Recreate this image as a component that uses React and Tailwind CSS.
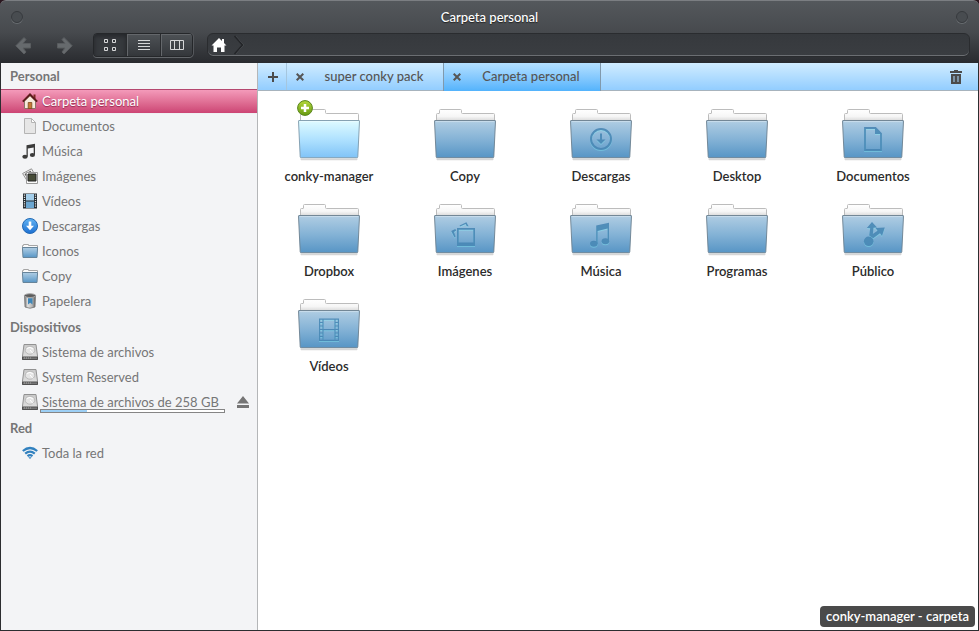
import React from "react"

const FolderDefs = () => (
	<svg className="absolute w-0 h-0" aria-hidden="true">
		<defs>
			<linearGradient id="front" x1="0" y1="0" x2="0" y2="1">
				<stop offset="0" stopColor="#b0cde3" />
				<stop offset="0.5" stopColor="#85b3d6" />
				<stop offset="1" stopColor="#5795c5" />
			</linearGradient>
			<linearGradient id="frontLit" x1="0" y1="0" x2="0" y2="1">
				<stop offset="0" stopColor="#dffbff" />
				<stop offset="0.5" stopColor="#b0e2ff" />
				<stop offset="1" stopColor="#80c3f7" />
			</linearGradient>
			<linearGradient id="paper" x1="0" y1="0" x2="0" y2="1">
				<stop offset="0" stopColor="#ffffff" />
				<stop offset="0.6" stopColor="#f6f6f6" />
				<stop offset="1" stopColor="#d8d8d8" />
			</linearGradient>
			<linearGradient id="green" x1="0" y1="0" x2="0" y2="1">
				<stop offset="0" stopColor="#b5d83f" />
				<stop offset="1" stopColor="#679a10" />
			</linearGradient>
			<linearGradient id="blue" x1="0" y1="0" x2="0" y2="1">
				<stop offset="0" stopColor="#62b4f3" />
				<stop offset="1" stopColor="#1c6fd2" />
			</linearGradient>
			<linearGradient id="metal" x1="0" y1="0" x2="0" y2="1">
				<stop offset="0" stopColor="#c9c9c9" />
				<stop offset="1" stopColor="#e2e2e2" />
			</linearGradient>
			<linearGradient id="can" x1="0" y1="0" x2="1" y2="0">
				<stop offset="0" stopColor="#6d6d6d" />
				<stop offset="0.3" stopColor="#e2e2e2" />
				<stop offset="0.7" stopColor="#b6b6b6" />
				<stop offset="1" stopColor="#5c5c5c" />
			</linearGradient>
		</defs>
	</svg>
)

/*
 * Emblems, drawn on the front of a folder
 */
const emblems = {
	download: (
		<g fill="none" stroke="#4583b2" strokeWidth="2">
			<circle cx="32" cy="33" r="10" />
			<path d="M32 27.5v7" />
			<path d="M27.5 33.5h9L32 38z" fill="#4583b2" stroke="none" />
		</g>
	),
	document: (
		<g fill="none" stroke="#4583b2" strokeWidth="1.8">
			<path d="M24 22h10.5l5.5 5.5v16.5H24z" />
			<path d="M34 22v6h6z" fill="#4583b2" stroke="none" />
		</g>
	),
	pictures: (
		<g fill="#4583b2">
			<path fillRule="evenodd" d="M24 27h18v18H24zM25.7 28.7v12.8h14.6V28.7z" />
			<path d="M22.3 28l.9 1.6-2.2 1.5 1.5 4.5-1 .8L18.2 30z" />
			<path d="M26.6 24.4l6.8-3.2 2.2 4h-1.8l-1.2-2.1-5.6 2.3z" />
		</g>
	),
	music: (
		<g fill="#4583b2">
			<path d="M27.2 24.4L40 21.7v19.4h-1.4V27.6l-10 2.4v13h-1.4z" />
			<ellipse cx="24.8" cy="42.8" rx="3.8" ry="3" />
			<ellipse cx="36.4" cy="40.2" rx="3.8" ry="3" />
		</g>
	),
	share: (
		<g fill="#4583b2">
			<circle cx="27.7" cy="40.3" r="4.8" />
			<path d="M28.2 34.6l1-7.4-3.4-.2L31 21l5 5.4-3.500.3-.6 6.300 4.600-3.200-2-2.800 9.300-.6-2.800 8.500-2-2.600-6.800 5z" />
		</g>
	),
	video: (
		<g fill="none" stroke="#4583b2" strokeWidth="1.2">
			<path d="M22.6 23.1h18.8v21.2H22.6zM26 23v21.3M38 23v21.3M26 33.7h12" />
			<path d="M22.6 26.5H26M22.6 30H26M22.6 33.5H26M22.6 37H26M22.6 40.5H26M38 26.5h3.4M38 30h3.4M38 33.5h3.4M38 37h3.4M38 40.5h3.4" />
		</g>
	),
}

const Folder = ({ emblem, lit }) => (
	<svg className="w-16 h-14" viewBox="0 0 64 56" aria-hidden="true">
		<path d="M3 52.6h58l-1 1.6H4z" fill="#000" opacity="0.16" />
		<path
			d="M3.5 15V8.5q0-1 1-1h1.5q.5 0 .5-.5V4.5q0-1 1-1h20q1 0 1 1v2q0 1 1 1h31q1 0 1 1V15z"
			fill={lit ? "#ffffff" : "url(#paper)"}
			stroke="#bcbcbc"
		/>
		<path
			d="M2 14.5h60q.6 0 .5.6l-1.7 35.7q0 .9-1 .9H4.2q-1 0-1-.9L1.5 15.1q0-.6.5-.6z"
			fill={lit ? "url(#frontLit)" : "url(#front)"}
			stroke={lit ? "#7c99ab" : "#6a7f8f"}
			strokeOpacity="0.9"
		/>
		<path d="M3 15.6h58" stroke="#fff" strokeOpacity="0.35" />
		{emblem && <g className="brightness-200" transform="translate(0 1)" opacity="0.3">{emblems[emblem]}</g>}
		{emblem && <g opacity="0.85">{emblems[emblem]}</g>}
	</svg>
)

/*
 * Sidebar icons
 */
const MiniFolder = () => (
	<svg className="w-4 h-4" viewBox="0 0 16 16" aria-hidden="true">
		<path d="M.5 5V2.5h1V1.5h5v1h9V5z" fill="#fafafa" stroke="#a5a5a5" />
		<path d="M.4 4.5h15.2L15 14.5H1z" fill="url(#front)" stroke="#66849a" />
	</svg>
)

const Drive = () => (
	<svg className="w-4 h-4" viewBox="0 0 16 16" aria-hidden="true">
		<path d="M2 .5h12l1.5 11.5v3.5H.5V12z" fill="url(#metal)" stroke="#929292" />
		<ellipse cx="8" cy="6.2" rx="4.8" ry="4" fill="#e4e4e4" stroke="#b0b0b0" strokeWidth="0.8" />
		<path d="M5 4.5q3-2.5 6 .5M8 6l3 3.5" fill="none" stroke="#fff" />
		<path d="M.5 13h15v2.5H.5z" fill="#777" stroke="#505050" />
		<path d="M2 14h8" stroke="#aaa" strokeDasharray="1 1" />
	</svg>
)

const icons = {
	home: (
		<svg className="w-4 h-4" viewBox="0 0 16 16" aria-hidden="true">
			<path d="M11.5 1.5h2V6h-2z" fill="#7b2b22" />
			<path d="M2.5 8L8 2.5 13.5 8v7.5h-11z" fill="#f6eadb" stroke="#8c7668" />
			<path d="M6.2 9.5h3.6v6H6.2z" fill="#c77a35" stroke="#7c4a1d" strokeWidth="0.8" />
			<path d="M.8 8.6L8 1.5l7.2 7.1" fill="none" stroke="#5c1c1b" strokeWidth="2" />
		</svg>
	),
	document: (
		<svg className="w-4 h-4" viewBox="0 0 16 16" aria-hidden="true">
			<path d="M2.5.5h7l4 4v11h-11z" fill="#e6e6e6" stroke="#b4b4b4" />
			<path d="M9.5.5v4h4z" fill="#fff" stroke="#b4b4b4" />
		</svg>
	),
	music: (
		<svg className="w-4 h-4" viewBox="0 0 16 16" fill="#3b3b3b" aria-hidden="true">
			<path d="M4.5 2.2L13 .8v11h-1.3V4.5L5.8 5.6v7.9H4.5z" />
			<ellipse cx="3" cy="13.8" rx="2.7" ry="2" />
			<ellipse cx="10.4" cy="12" rx="2.6" ry="2" />
		</svg>
	),
	pictures: (
		<svg className="w-4 h-4" viewBox="0 0 16 16" aria-hidden="true">
			<path d="M.6 5.5L9.5.8l3.5 6-8.500 5z" fill="#f4f4f4" stroke="#929292" />
			<path d="M2.500 6l6-3.200L11 7l-6 3z" fill="#5c5c5c" />
			<path d="M4.500 4.500h11v11h-11z" fill="#fafafa" stroke="#999" />
			<path d="M6 6h8v7H6z" fill="#474c38" stroke="#222" />
		</svg>
	),
	video: (
		<svg className="w-4 h-4" viewBox="0 0 16 16" aria-hidden="true">
			<path d="M1 .5h14v15H1z" fill="#242c32" />
			<path d="M4 1h8v6.500H4z" fill="#a2cdea" />
			<path d="M4 8.500h8V15H4z" fill="#6ba7d2" />
			<path d="M2.500 1.500v13M13.500 1.500v13" stroke="#dedede" strokeWidth="1.300" strokeDasharray="1.200 1" />
		</svg>
	),
	download: (
		<svg className="w-4 h-4" viewBox="0 0 16 16" aria-hidden="true">
			<circle cx="8" cy="8" r="7.5" fill="url(#blue)" stroke="#2369b4" />
			<path d="M6.7 3.5h2.6v4.200H12l-4 4.500-4-4.500h2.700z" fill="#fff" />
		</svg>
	),
	folder: <MiniFolder />,
	trash: (
		<svg className="w-4 h-4" viewBox="0 0 16 16" aria-hidden="true">
			<path d="M2.5 2.5h11l-.5 11.500q-5 2.500-10 0z" fill="url(#can)" stroke="#777" strokeWidth="0.8" />
			<ellipse cx="8" cy="2.600" rx="5.600" ry="1.900" fill="#5d5d5d" stroke="#aaa" />
			<path d="M6 5.300h4.500v6.200L8.200 9.700 6 11.500z" fill="#3e86b8" />
		</svg>
	),
	drive: <Drive />,
	network: (
		<svg className="w-4 h-4" viewBox="0 0 16 16" fill="none" stroke="#3181bf" strokeWidth="2.2" aria-hidden="true">
			<path d="M.8 6q7.200-6 14.400 0" />
			<path d="M3.200 8.700q4.800-4 9.600 0" />
			<path d="M5.500 11.200q2.500-2 5 0" />
			<path d="M6.300 12.200h3.400L8 14z" fill="#3181bf" stroke="none" />
		</svg>
	),
}

const sections = [
	{
		title: "Personal",
		items: [
			{ label: "Carpeta personal", icon: "home", selected: true },
			{ label: "Documentos", icon: "document" },
			{ label: "Música", icon: "music" },
			{ label: "Imágenes", icon: "pictures" },
			{ label: "Vídeos", icon: "video" },
			{ label: "Descargas", icon: "download" },
			{ label: "Iconos", icon: "folder" },
			{ label: "Copy", icon: "folder" },
			{ label: "Papelera", icon: "trash" },
		],
	},
	{
		title: "Dispositivos",
		items: [
			{ label: "Sistema de archivos", icon: "drive" },
			{ label: "System Reserved", icon: "drive" },
			{ label: "Sistema de archivos de 258 GB", icon: "drive", usage: 25 },
		],
	},
	{
		title: "Red",
		items: [{ label: "Toda la red", icon: "network" }],
	},
]

const folders = [
	{ label: "conky-manager", lit: true },
	{ label: "Copy" },
	{ label: "Descargas", emblem: "download" },
	{ label: "Desktop" },
	{ label: "Documentos", emblem: "document" },
	{ label: "Dropbox" },
	{ label: "Imágenes", emblem: "pictures" },
	{ label: "Música", emblem: "music" },
	{ label: "Programas" },
	{ label: "Público", emblem: "share" },
	{ label: "Vídeos", emblem: "video" },
]

const WindowDot = ({ label }) => (
	<button
		aria-label={label}
		className="w-3 h-3 rounded-full border border-[#36393d] bg-[#484c50] shadow-[0_1px_0_#686c70]"
	/>
)

const Arrow = ({ label, flip }) => (
	<button aria-label={label} className="w-4 h-5 flex items-center justify-center">
		<svg className={flip ? "w-4 h-5 -scale-x-100" : "w-4 h-5"} viewBox="0 0 16 20" aria-hidden="true">
			<path d="M9 2.5l2 2L8 8.500h7.500v4.500H8l3 4-2 2-8.200-8.200z" fill="#666a6d" stroke="#595c5f" strokeLinejoin="round" />
		</svg>
	</button>
)

const Header = () => (
	<header className="shrink-0 h-[63px] px-px flex flex-col rounded-t-md border-t border-[#7b7e82] bg-linear-to-b from-[#54585c] via-[#474a4e] to-[#292b2f]">

		{/* Title bar */}
		<div className="h-8 px-2.5 flex items-center justify-between">
			<WindowDot label="Cerrar" />
			<h1 className="text-[13px] font-medium text-white [text-shadow:0_1px_1px_#222]">Carpeta personal</h1>
			<WindowDot label="Maximizar" />
		</div>

		{/* Toolbar */}
		<div className="pl-3.5 pr-2 h-6 flex items-center">
			<div className="flex gap-[26px]">
				<Arrow label="Atrás" />
				<Arrow label="Adelante" flip />
			</div>
			<div className="ml-5 h-6 flex rounded-sm border border-[#25272a] shadow-[0_1px_0_#63666a,1px_0_0_#55585c] overflow-hidden text-[#d6d7d8]">
				<button aria-label="Iconos" className="w-8 flex items-center justify-center bg-[#36393d] shadow-[inset_0_2px_4px_#24262a]">
					<svg className="w-4 h-4" viewBox="0 0 16 16" fill="none" stroke="currentColor" aria-hidden="true">
						<path d="M2.5 2.5h3v3h-3zM10.5 2.5h3v3h-3zM2.5 10.5h3v3h-3zM10.5 10.5h3v3h-3z" />
					</svg>
				</button>
				<button aria-label="Lista" className="w-[34px] flex items-center justify-center border-l border-[#292b2e] bg-linear-to-b from-[#4e5256] to-[#34373b] shadow-[inset_1px_1px_0_#64676b]">
					<svg className="w-4 h-4" viewBox="0 0 16 16" stroke="currentColor" aria-hidden="true">
						<path d="M2 3.5h12M2 6.5h12M2 9.5h12M2 12.5h12" />
					</svg>
				</button>
				<button aria-label="Columnas" className="w-8 flex items-center justify-center border-l border-[#292b2e] bg-linear-to-b from-[#4e5256] to-[#34373b] shadow-[inset_1px_1px_0_#64676b]">
					<svg className="w-4 h-4" viewBox="0 0 16 16" fill="none" stroke="currentColor" aria-hidden="true">
						<path d="M1.5 3.5h13v9h-13zM5.5 3.5v9M10.5 3.5v9" />
					</svg>
				</button>
			</div>
			<div className="ml-3.5 h-6 flex-1 flex items-center rounded-md border border-[#2a2c2f] bg-linear-to-b from-[#36393d] to-[#3a3d41] shadow-[inset_0_-1px_0_#6b6e72]">
				<button aria-label="Carpeta personal" className="pl-[3px] flex items-center">
					<svg className="w-4 h-4" viewBox="0 0 16 16" fill="#fff" aria-hidden="true">
						<path d="M8 1L.5 8.5h2V15H6v-4.500h4V15h3.500V8.500h2L13 6V2h-2v2z" />
					</svg>
					<svg className="ml-1.5 w-3 h-5" viewBox="0 0 12 20" fill="none" aria-hidden="true">
						<path d="M2.5 1l8 9-8 9" stroke="#55585c" strokeWidth="1" />
						<path d="M1.5 1l8 9-8 9" stroke="#232528" strokeWidth="1.5" />
					</svg>
				</button>
				<input aria-label="Ruta" className="flex-1 min-w-0 px-2 text-[13px] text-white bg-transparent outline-none" />
			</div>
		</div>

	</header>
)

const Place = ({ label, icon, selected, usage }) => (
	<li
		className={
			selected
				? "h-[25px] flex items-center border-t border-[#b5476f] bg-linear-to-b from-[#f39aba] to-[#cc4474] text-white [text-shadow:0_1px_1px_#8f2a50] border-b border-b-[#eef0f2]"
				: "h-[25px] flex items-center text-[#767676]"
		}
	>
		<a href="#" aria-current={selected ? "page" : undefined} className="relative pl-[21px] pb-0.5 flex-1 h-full flex items-center gap-1">
			{icons[icon]}
			<span>{label}</span>
			{usage && (
				<div
					role="meter"
					aria-label="Espacio usado"
					aria-valuenow={usage}
					aria-valuemin="0"
					aria-valuemax="100"
					className="absolute left-[39px] right-0 bottom-0.5 h-1 border border-[#858585] bg-white"
				>
					<div className="h-full bg-[#9ccff5]" style={{ width: `${usage}%` }} />
				</div>
			)}
		</a>
		{usage && (
			<button aria-label="Expulsar" className="ml-3 mr-2 pb-0.5">
				<svg className="w-3 h-3" viewBox="0 0 12 12" fill="#757575" aria-hidden="true">
					<path d="M6 0l6 7.5H0zM0 9h12v3H0z" />
				</svg>
			</button>
		)}
	</li>
)

const Sidebar = () => (
	<nav aria-label="Lugares" className="shrink-0 w-[257px] border-r border-[#b4b6b8] bg-[#f3f4f6]">
		{sections.map(section => (
			<section key={section.title}>
				<h2 className="h-[26px] px-[9px] pb-px flex items-center text-[13px] font-bold text-[#767676]">{section.title}</h2>
				<ul>
					{section.items.map(item => (
						<Place key={item.label} {...item} />
					))}
				</ul>
			</section>
		))}
	</nav>
)

const Tab = ({ label, active }) => (
	<div
		className={
			active
				? "w-[158px] flex items-center border-x border-[#8199ac] bg-linear-to-b from-[#b4e0ff] to-[#53b3fc]"
				: "w-[156px] flex items-center border-b border-[#a7b3bd]"
		}
	>
		<button aria-label={`Cerrar ${label}`} className="w-[26px] h-full flex items-center justify-center">
			<svg className="w-2 h-2" viewBox="0 0 8 8" stroke="#555" strokeWidth="2" aria-hidden="true">
				<path d="M.7.7l6.6 6.6M7.3.7L.7 7.3" />
			</svg>
		</button>
		<button role="tab" aria-selected={!!active} className="flex-1 pr-2 pb-0.5 h-full font-medium text-[#555]">{label}</button>
	</div>
)

const Tabs = () => (
	<div className="shrink-0 h-7 flex bg-linear-to-b from-[#d0ecff] to-[#90ccff]">
		<div className="w-[29px] border-b border-[#a7b3bd] flex">
			<button aria-label="Nueva pestaña" className="flex-1 pl-0.5 border-r border-[#a5c6de] flex items-center justify-center">
				<svg className="w-2.5 h-2.5" viewBox="0 0 10 10" stroke="#4b4b4b" strokeWidth="2" aria-hidden="true">
					<path d="M5 0v10M0 5h10" />
				</svg>
			</button>
		</div>
		<div role="tablist" className="flex">
			<Tab label="super conky pack" />
			<Tab label="Carpeta personal" active />
		</div>
		<div className="flex-1 pr-4 flex items-center justify-end border-b border-[#a7b3bd]">
			<button aria-label="Pestañas cerradas">
				<svg className="w-3 h-3.5" viewBox="0 0 12 14" aria-hidden="true">
					<path d="M4 0h4v1h4v2H0V1h4z" fill="#4b4b4b" />
					<path fillRule="evenodd" d="M1 4h10v10H1zM3.5 6v6h1V6zM7.5 6v6h1V6z" fill="#4b4b4b" />
				</svg>
			</button>
		</div>
	</div>
)

const App = () => (
	<div className="h-screen min-h-[480px] flex flex-col bg-[#2a171f] font-['Lato',sans-serif] text-[13px] leading-5">
		<FolderDefs />
		<Header />
		<div className="flex-1 min-h-0 flex border border-t-0 border-[#2c2d30]">
			<Sidebar />
			<main className="relative flex-1 min-w-0 flex flex-col bg-white">
				<Tabs />
				<ul className="pl-[3px] pt-[15px] grid grid-cols-[repeat(auto-fill,136px)] auto-rows-[95px]">
					{folders.map(({ label, emblem, lit }) => (
						<li key={label} className="flex justify-center">
							<button className="relative h-20 flex flex-col items-center gap-1 font-semibold text-[#2b2b2b]">
								<Folder emblem={emblem} lit={lit} />
								<span>{label}</span>
								{lit && (
									<svg className="absolute left-1/2 -ml-8 -top-1.5 w-4 h-4" viewBox="0 0 16 16" aria-hidden="true">
										<circle cx="8" cy="8" r="7.4" fill="url(#green)" stroke="#58851a" />
										<path d="M8 4v8M4 8h8" stroke="#fff" strokeWidth="2.5" />
									</svg>
								)}
							</button>
						</li>
					))}
				</ul>
				<div role="status" className="absolute right-[3px] bottom-[3px] px-1.5 h-[21px] rounded-sm bg-[#4a4a4a] font-semibold text-white">
					conky-manager - carpeta
				</div>
			</main>
		</div>
	</div>
)

export default App
